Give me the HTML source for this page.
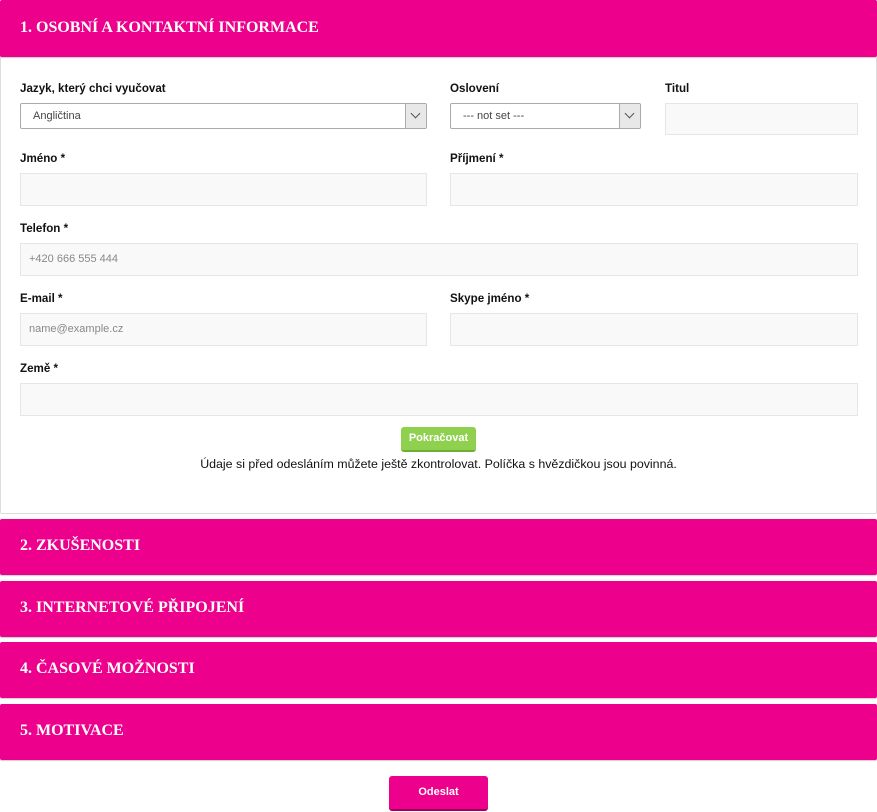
<!DOCTYPE html>
<html><head><meta charset="utf-8"><style>
*{box-sizing:border-box;margin:0;padding:0}
body{width:877px;height:812px;background:#fff;font-family:"Liberation Sans",sans-serif;position:relative;overflow:hidden}
.a{position:absolute}
.hd{position:absolute;left:0;width:877px;background:#ec008c;color:#fff;font-family:"Liberation Serif",serif;font-weight:bold;font-size:16px;padding-left:20px;border-radius:2px;box-shadow:0 1px 1px #ccc}
.lb{position:absolute;font-size:11.6px;font-weight:bold;color:#111}
.in{position:absolute;background:#f9f9f9;border:1px solid #e6e6e6;height:33px;font-size:11px;color:#888;padding-left:8px;line-height:31px}
.sel{position:absolute;background:#fff;border:1px solid #aaa;border-radius:2px;height:26px;font-size:11px;color:#444;padding-left:12px;line-height:24px}
.sel i{position:absolute;right:0;top:0;width:21px;height:24px;background:#e8e8e8;border-left:1px solid #aaa}
.sel i:after{content:"";position:absolute;left:6px;top:6px;width:6px;height:6px;border-right:1.5px solid #555;border-bottom:1.5px solid #555;transform:rotate(45deg)}
</style></head><body>
<div class="a" style="left:0;top:0;width:877px;height:514px;border:1px solid #ddd;border-radius:2px"></div>
<div class="hd" style="top:0;height:57px;line-height:55px">1. OSOBNÍ A KONTAKTNÍ INFORMACE</div>
<div class="lb" style="left:20px;top:82px">Jazyk, který chci vyučovat</div>
<div class="lb" style="left:450px;top:82px">Oslovení</div>
<div class="lb" style="left:665px;top:82px">Titul</div>
<div class="sel" style="left:20px;top:103px;width:407px">Angličtina<i></i></div>
<div class="sel" style="left:450px;top:103px;width:191px">--- not set ---<i></i></div>
<div class="in" style="left:665px;top:103px;width:193px;height:32px"></div>
<div class="lb" style="left:20px;top:152px">Jméno *</div>
<div class="lb" style="left:450px;top:152px">Příjmení *</div>
<div class="in" style="left:20px;top:173px;width:407px"></div>
<div class="in" style="left:450px;top:173px;width:408px"></div>
<div class="lb" style="left:20px;top:222px">Telefon *</div>
<div class="in" style="left:20px;top:243px;width:838px">+420 666 555 444</div>
<div class="lb" style="left:20px;top:292px">E-mail *</div>
<div class="lb" style="left:450px;top:292px">Skype jméno *</div>
<div class="in" style="left:20px;top:313px;width:407px">name@example.cz</div>
<div class="in" style="left:450px;top:313px;width:408px"></div>
<div class="lb" style="left:20px;top:362px">Země *</div>
<div class="in" style="left:20px;top:383px;width:838px"></div>
<div class="a" style="left:401px;top:427px;width:75px;height:25px;background:#8fd14f;border-radius:3px;border-bottom:2px solid #6fae35;color:#fff;font-size:11px;font-weight:bold;text-align:center;line-height:23px">Pokračovat</div>
<div class="a" style="left:0;top:457px;width:877px;text-align:center;font-size:12.4px;color:#111">Údaje si před odesláním můžete ještě zkontrolovat. Políčka s hvězdičkou jsou povinná.</div>
<div class="hd" style="top:519px;height:56px;line-height:54px">2. ZKUŠENOSTI</div>
<div class="hd" style="top:581px;height:56px;line-height:54px">3. INTERNETOVÉ PŘIPOJENÍ</div>
<div class="hd" style="top:642px;height:56px;line-height:54px">4. ČASOVÉ MOŽNOSTI</div>
<div class="hd" style="top:704px;height:56px;line-height:54px">5. MOTIVACE</div>
<div class="a" style="left:389px;top:776px;width:99px;height:35px;background:#ec008c;border-radius:3px;border-bottom:2px solid #a0005f;color:#fff;font-size:11px;font-weight:bold;text-align:center;line-height:33px">Odeslat</div>
</body></html>
